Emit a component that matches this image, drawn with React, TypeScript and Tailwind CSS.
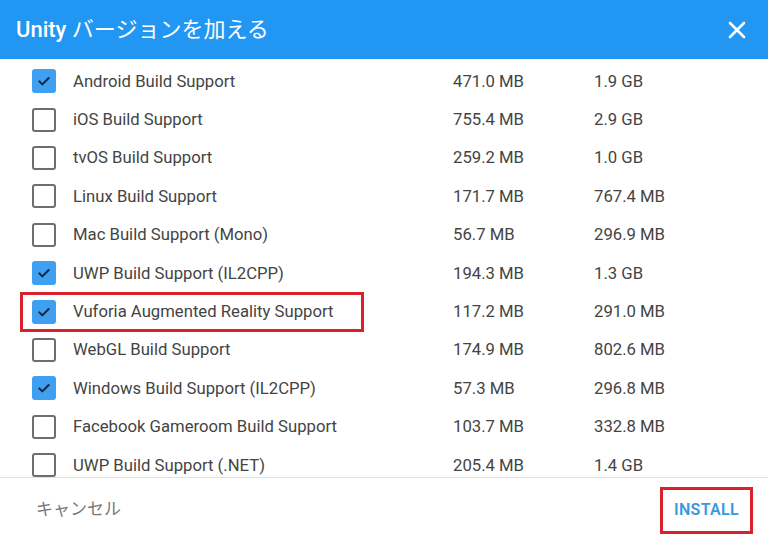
import React from 'react'

type Item = { name: string; size: string; total: string; checked: boolean; marked?: boolean }

const items: Item[] = [
  { name: 'Android Build Support', size: '471.0 MB', total: '1.9 GB', checked: true },
  { name: 'iOS Build Support', size: '755.4 MB', total: '2.9 GB', checked: false },
  { name: 'tvOS Build Support', size: '259.2 MB', total: '1.0 GB', checked: false },
  { name: 'Linux Build Support', size: '171.7 MB', total: '767.4 MB', checked: false },
  { name: 'Mac Build Support (Mono)', size: '56.7 MB', total: '296.9 MB', checked: false },
  { name: 'UWP Build Support (IL2CPP)', size: '194.3 MB', total: '1.3 GB', checked: true },
  { name: 'Vuforia Augmented Reality Support', size: '117.2 MB', total: '291.0 MB', checked: true, marked: true },
  { name: 'WebGL Build Support', size: '174.9 MB', total: '802.6 MB', checked: false },
  { name: 'Windows Build Support (IL2CPP)', size: '57.3 MB', total: '296.8 MB', checked: true },
  { name: 'Facebook Gameroom Build Support', size: '103.7 MB', total: '332.8 MB', checked: false },
  { name: 'UWP Build Support (.NET)', size: '205.4 MB', total: '1.4 GB', checked: false },
]

const Checkbox: React.FC<{ checked: boolean }> = ({ checked }) =>
  checked ? (
    <div className="w-[24px] h-[24px] rounded-[3px] bg-[#3f9ff0] flex items-center justify-center">
      <svg width="16" height="16" viewBox="0 0 24 24" fill="none" stroke="#16243d" strokeWidth="3" strokeLinecap="round" strokeLinejoin="round">
        <path d="M5 12.5l4.5 4.5L19 7.5" />
      </svg>
    </div>
  ) : (
    <div className="w-[24px] h-[24px] rounded-[3px] border-2 border-[#6e6e6e] bg-white" />
  )

const App: React.FC = () => {
  return (
    <div
      className="w-[768px] h-[550px] bg-white flex flex-col overflow-hidden"
      style={{ fontFamily: 'Roboto, "Noto Sans CJK JP", sans-serif' }}
    >
      {/* Header */}
      <div className="h-[59px] shrink-0 bg-[#2196f3] flex items-center justify-between pl-[16px] pr-[22px]">
        <h1 className="text-[22px] text-white leading-none">
          <span className="font-medium">Unity</span> バージョンを加える
        </h1>
        <svg width="18" height="18" viewBox="0 0 18 18" stroke="white" strokeWidth="2.6" strokeLinecap="round">
          <path d="M2 2l14 14M16 2L2 16" />
        </svg>
      </div>

      {/* Module list */}
      <div className="h-[418px] shrink-0 overflow-hidden pt-[3px]">
        {items.map((item) => (
          <div key={item.name} className="h-[38.4px] flex items-center text-[16.7px] text-[#444444]">
            <div
              className={
                item.marked
                  ? 'ml-[20px] w-[344px] h-[40px] border-[3px] border-[#d8232e] flex items-center pl-[9px]'
                  : 'ml-[20px] w-[344px] h-[40px] border-[3px] border-transparent flex items-center pl-[9px]'
              }
            >
              <Checkbox checked={item.checked} />
              <span className="ml-[17px]">{item.name}</span>
            </div>
            <span className="ml-[89px] w-[141px]">{item.size}</span>
            <span>{item.total}</span>
          </div>
        ))}
      </div>

      {/* Footer */}
      <div className="flex-1 border-t border-[#e2e2e2] flex items-center justify-between pl-[36px] pr-[15px] pb-[8px]">
        <button className="text-[17px] text-[#777777]">キャンセル</button>
        <div className="w-[93px] h-[47px] border-[3px] border-[#d8232e] flex items-center justify-center">
          <button className="text-[16px] font-semibold tracking-[0.3px] text-[#3a98dc]">INSTALL</button>
        </div>
      </div>
    </div>
  )
}

export default App
